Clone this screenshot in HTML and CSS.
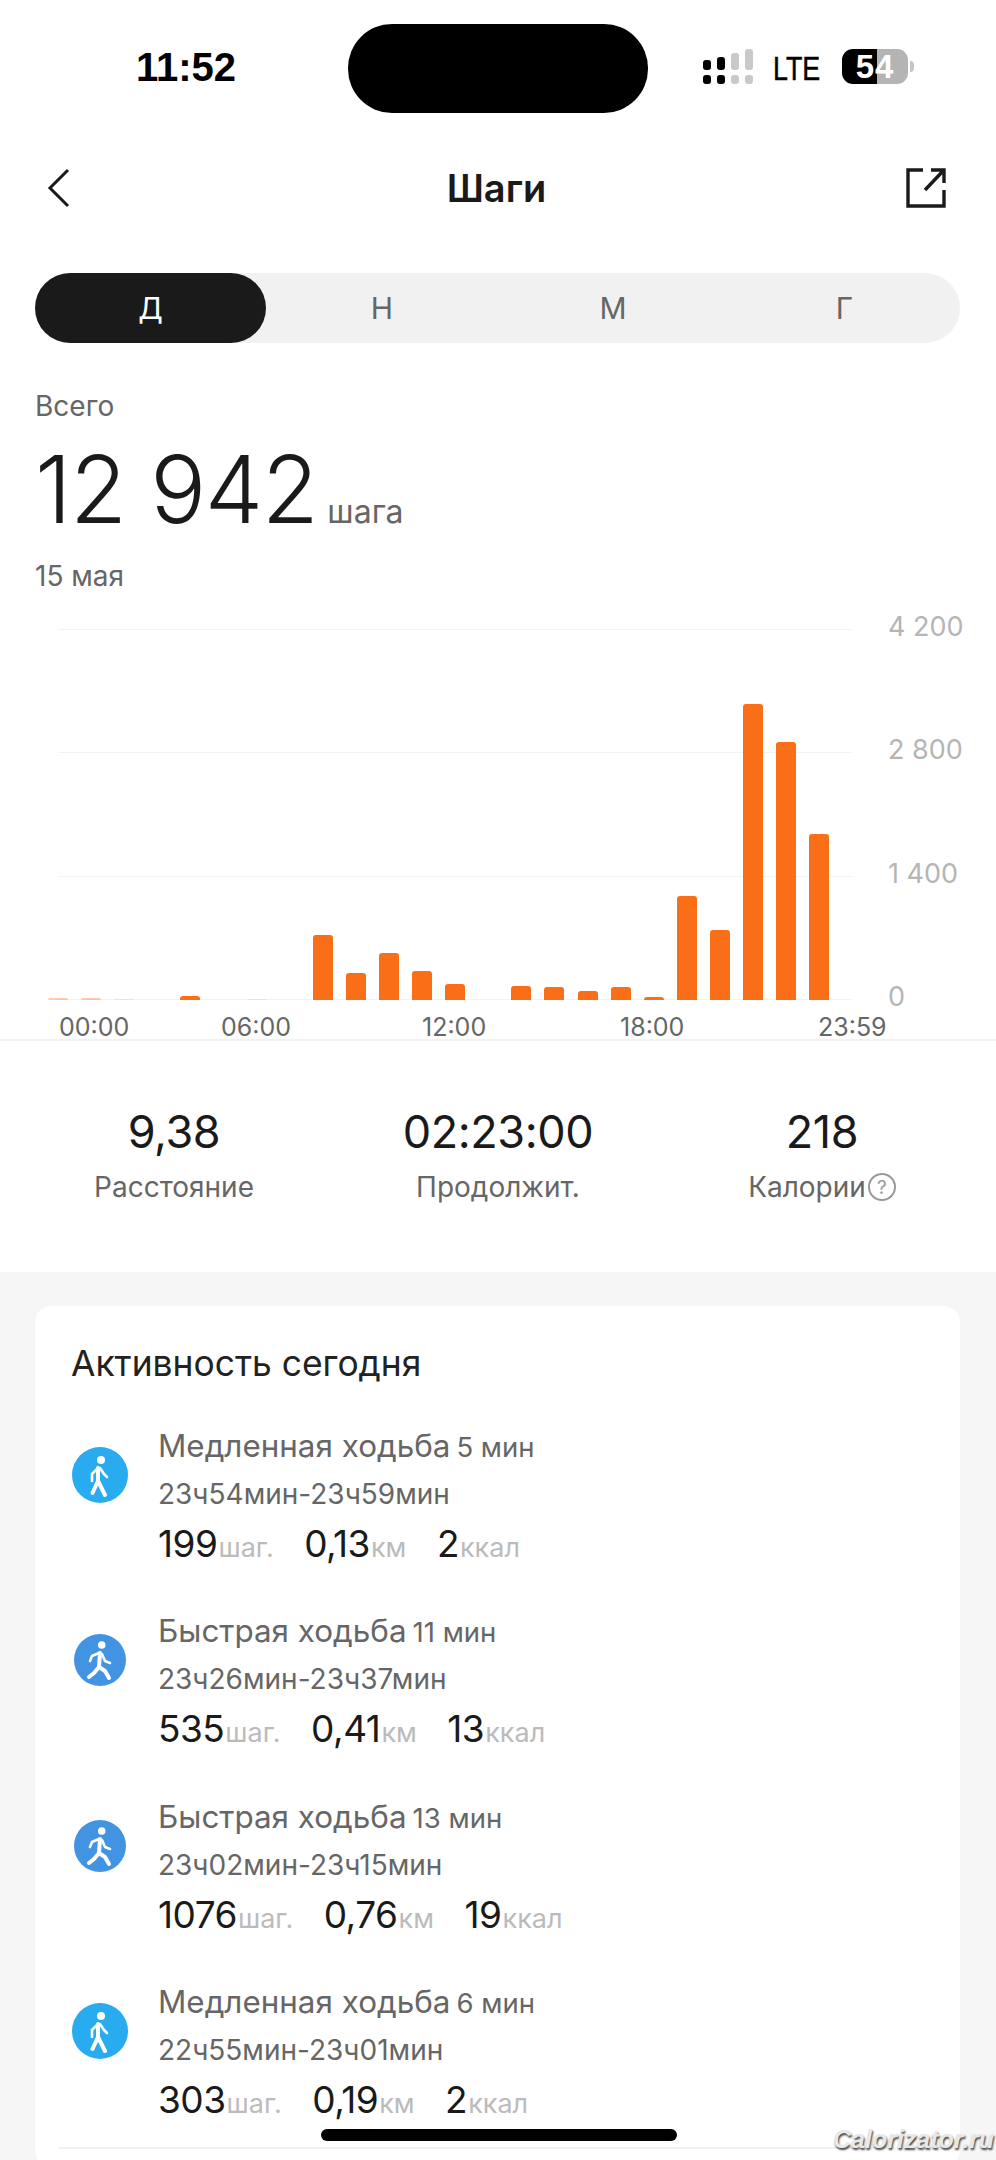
FILE: index.html
```html
<!DOCTYPE html>
<html lang="ru">
<head>
<meta charset="utf-8">
<title>Шаги</title>
<link rel="stylesheet" href="styles.css">
</head>
<body>
<div class="screen">
  <header class="status">
    <span class="clock">11:52</span>
    <span class="island"></span>
    <span class="signal">
      <span class="sig-col"><i class="up h10"></i><i class="down"></i></span>
      <span class="sig-col"><i class="up h13"></i><i class="down"></i></span>
      <span class="sig-col off"><i class="up h17"></i><i class="down"></i></span>
      <span class="sig-col off"><i class="up h21"></i><i class="down"></i></span>
    </span>
    <span class="lte">LTE</span>
    <span class="battery"><span class="batt-num">54</span></span>
    <span class="batt-tip"></span>
  </header>

  <nav class="nav">
    <svg class="nav-back" viewBox="0 0 24 40" width="24" height="40"><path d="M22 2 4 20l18 18" fill="none" stroke="#1a1a1a" stroke-width="3"/></svg>
    <h1 class="nav-title">Шаги</h1>
    <svg class="nav-share" viewBox="0 0 42 42" width="42" height="42"><path d="M18 3H3v36h36V23" fill="none" stroke="#1a1a1a" stroke-width="3.4"/><path d="M20 23 38 4M26 3h13v13" fill="none" stroke="#1a1a1a" stroke-width="3.4"/></svg>
  </nav>

  <div class="tabs">
    <span class="tab active">Д</span>
    <span class="tab">Н</span>
    <span class="tab">М</span>
    <span class="tab">Г</span>
  </div>

  <section class="total">
    <div class="total-label">Всего</div>
    <div class="total-row"><span class="total-num">12 942</span><span class="total-unit">шага</span></div>
    <div class="total-date">15 мая</div>
  </section>

  <section class="chart">
    <div class="plot">
      <div class="gridrow"><span class="gridline"></span><span class="ylabel">4 200</span></div>
      <div class="gridrow"><span class="gridline"></span><span class="ylabel">2 800</span></div>
      <div class="gridrow"><span class="gridline"></span><span class="ylabel">1 400</span></div>
      <div class="gridrow last"><span class="gridline"></span><span class="ylabel">0</span></div>
      <div class="bars">
        <span class="bar faint" style="height:2px"></span>
        <span class="bar faint" style="height:2px"></span>
        <span class="bar fainter" style="height:1px"></span>
        <span class="bar" style="height:0"></span>
        <span class="bar" style="height:4px"></span>
        <span class="bar" style="height:0"></span>
        <span class="bar fainter" style="height:1px"></span>
        <span class="bar" style="height:0"></span>
        <span class="bar" style="height:65px"></span>
        <span class="bar" style="height:27px"></span>
        <span class="bar" style="height:47px"></span>
        <span class="bar" style="height:29px"></span>
        <span class="bar" style="height:16px"></span>
        <span class="bar" style="height:0"></span>
        <span class="bar" style="height:14px"></span>
        <span class="bar" style="height:13px"></span>
        <span class="bar" style="height:9px"></span>
        <span class="bar" style="height:13px"></span>
        <span class="bar" style="height:3px"></span>
        <span class="bar" style="height:104px"></span>
        <span class="bar" style="height:70px"></span>
        <span class="bar" style="height:296px"></span>
        <span class="bar" style="height:258px"></span>
        <span class="bar" style="height:166px"></span>
      </div>
    </div>
    <div class="xlabels">
      <span>00:00</span><span>06:00</span><span>12:00</span><span>18:00</span><span>23:59</span>
    </div>
  </section>

  <section class="stats">
    <div class="stat"><div class="stat-value">9,38</div><div class="stat-label">Расстояние</div></div>
    <div class="stat"><div class="stat-value">02:23:00</div><div class="stat-label">Продолжит.</div></div>
    <div class="stat"><div class="stat-value">218</div><div class="stat-label">Калории<span class="help">?</span></div></div>
  </section>

  <main class="lower">
    <section class="card">
      <h2 class="card-title">Активность сегодня</h2>

      <article class="row">
        <span class="ico-cell"><svg class="ico slow" viewBox="0 0 56 56" width="56" height="56"><circle cx="28" cy="28" r="28" fill="#29abf0"/><circle cx="29" cy="13" r="4" fill="#fff"/><path d="M26 21v13M26 34l-5.500 12M26 34l7 14" fill="none" stroke="#fff" stroke-width="4" stroke-linecap="round"/><path d="M26 21l-6 6v7M28 21l4 6 3 3" fill="none" stroke="#fff" stroke-width="2.600" stroke-linecap="round" stroke-linejoin="round"/></svg></span>
        <div class="row-body">
          <div class="row-title">Медленная ходьба<span class="row-dur">5 мин</span></div>
          <div class="row-time">23ч54мин-23ч59мин</div>
          <div class="row-vals"><span class="val"><b>199</b><em>шаг.</em></span><span class="val"><b>0,13</b><em>км</em></span><span class="val"><b>2</b><em>ккал</em></span></div>
        </div>
      </article>

      <article class="row">
        <span class="ico-cell"><svg class="ico fast" viewBox="0 0 52 52" width="52" height="52"><circle cx="26" cy="26" r="26" fill="#4294e3"/><circle cx="27.700" cy="11" r="3.800" fill="#fff"/><path d="M26 19l-1 14M25 33l-5 6-5 4M25 33l6 4 4 7" fill="none" stroke="#fff" stroke-width="4" stroke-linecap="round" stroke-linejoin="round"/><path d="M25 19l-7 3-2 5M28 20l3 7 5 2" fill="none" stroke="#fff" stroke-width="2.600" stroke-linecap="round" stroke-linejoin="round"/></svg></span>
        <div class="row-body">
          <div class="row-title">Быстрая ходьба<span class="row-dur">11 мин</span></div>
          <div class="row-time">23ч26мин-23ч37мин</div>
          <div class="row-vals"><span class="val"><b>535</b><em>шаг.</em></span><span class="val"><b>0,41</b><em>км</em></span><span class="val"><b>13</b><em>ккал</em></span></div>
        </div>
      </article>

      <article class="row">
        <span class="ico-cell"><svg class="ico fast" viewBox="0 0 52 52" width="52" height="52"><circle cx="26" cy="26" r="26" fill="#4294e3"/><circle cx="27.700" cy="11" r="3.800" fill="#fff"/><path d="M26 19l-1 14M25 33l-5 6-5 4M25 33l6 4 4 7" fill="none" stroke="#fff" stroke-width="4" stroke-linecap="round" stroke-linejoin="round"/><path d="M25 19l-7 3-2 5M28 20l3 7 5 2" fill="none" stroke="#fff" stroke-width="2.600" stroke-linecap="round" stroke-linejoin="round"/></svg></span>
        <div class="row-body">
          <div class="row-title">Быстрая ходьба<span class="row-dur">13 мин</span></div>
          <div class="row-time">23ч02мин-23ч15мин</div>
          <div class="row-vals"><span class="val"><b>1076</b><em>шаг.</em></span><span class="val"><b>0,76</b><em>км</em></span><span class="val"><b>19</b><em>ккал</em></span></div>
        </div>
      </article>

      <article class="row">
        <span class="ico-cell"><svg class="ico slow" viewBox="0 0 56 56" width="56" height="56"><circle cx="28" cy="28" r="28" fill="#29abf0"/><circle cx="29" cy="13" r="4" fill="#fff"/><path d="M26 21v13M26 34l-5.500 12M26 34l7 14" fill="none" stroke="#fff" stroke-width="4" stroke-linecap="round"/><path d="M26 21l-6 6v7M28 21l4 6 3 3" fill="none" stroke="#fff" stroke-width="2.600" stroke-linecap="round" stroke-linejoin="round"/></svg></span>
        <div class="row-body">
          <div class="row-title">Медленная ходьба<span class="row-dur">6 мин</span></div>
          <div class="row-time">22ч55мин-23ч01мин</div>
          <div class="row-vals"><span class="val"><b>303</b><em>шаг.</em></span><span class="val"><b>0,19</b><em>км</em></span><span class="val"><b>2</b><em>ккал</em></span></div>
        </div>
      </article>
      <div class="card-rule"></div>
    </section>
  </main>

  <span class="home-bar"></span>
  <span class="watermark">Calorizator.ru</span>
</div>
</body>
</html>
```
FILE: styles.css
```css
* { box-sizing: border-box; }
html, body { margin: 0; padding: 0; background: #fff; }
body { font-family: Inter, "Liberation Sans", sans-serif; color: #1a1a1a; }
.screen { position: relative; width: 996px; height: 2160px; overflow: hidden; background: #fff; }

/* status bar */
.status { display: flex; align-items: flex-start; height: 113px; padding: 24px 0 0 136px; }
.clock { width: 212px; margin-top: 20px; font: 700 40px/46px "Liberation Sans", sans-serif; color: #000; }
.island { width: 300px; height: 89px; border-radius: 44px; background: #000; }
.signal { display: flex; gap: 6px; margin: 25px 0 0 55px; }
.sig-col { display: flex; flex-direction: column; justify-content: flex-end; width: 8px; height: 35px; gap: 5px; }
.sig-col i { display: block; border-radius: 3px; background: #000; }
.sig-col .down { height: 9px; }
.sig-col.off i { background: #c9c9c9; }
.h10 { height: 10px; }
.h13 { height: 13px; }
.h17 { height: 17px; }
.h21 { height: 21px; }
.lte { width: 48px; margin: 27px 0 0 20px; font: 400 34px/34px "Liberation Sans", sans-serif; color: #000; -webkit-text-stroke: .5px #000; transform: scaleX(.79); transform-origin: left center; }
.battery { display: flex; align-items: center; justify-content: center; width: 66px; height: 35px; margin: 25px 0 0 21px; border-radius: 11px; background: linear-gradient(90deg, #000 0 53%, #b4b4b4 53% 100%); }
.batt-num { font: 700 33px/35px "Liberation Sans", sans-serif; letter-spacing: 1px; color: #fff; }
.batt-tip { width: 4px; height: 11px; margin: 37px 0 0 2px; border-radius: 0 6px 6px 0; background: #c4c4c4; }

/* nav */
.nav { display: grid; grid-template-columns: 1fr auto 1fr; align-items: center; height: 44px; margin-top: 53px; padding: 0 49px 0 46px; }
.nav-back { display: block; }
.nav-title { margin: 0; font-size: 38px; font-weight: 600; line-height: 44px; color: #1a1a1a; }
.nav-share { display: block; justify-self: end; }

/* tabs */
.tabs { display: flex; height: 70px; margin: 63px 36px 0 35px; border-radius: 35px; background: #f1f1f1; }
.tab { flex: 1; display: flex; align-items: center; justify-content: center; border-radius: 35px; font-size: 30px; color: #666; }
.tab.active { background: #1a1a1a; color: #fff; }

/* totals */
.total { padding: 47px 0 0 35px; }
.total-label, .total-date { font-size: 28px; line-height: 32px; color: #666; }
.total-row { display: flex; align-items: baseline; height: 92px; margin-top: 21px; line-height: 92px; }
.total-num { font-size: 93px; font-weight: 300; color: #1a1a1a; letter-spacing: -1.5px; }
.total-unit { margin-left: 10px; font-size: 32px; color: #666; }
.total-date { margin-top: 25px; }

/* chart */
.chart { margin-top: 37px; }
.plot { position: relative; height: 371px; }
.gridrow { display: flex; height: 123.300px; padding-left: 58px; }
.gridrow.last { height: 1px; }
.gridline { width: 794px; height: 1px; background: #f3f3f3; }
.ylabel { position: relative; top: -18px; height: 32px; margin-left: 36px; font-size: 27px; line-height: 32px; color: #b5b5b5; white-space: nowrap; }
.bars { position: absolute; left: 48px; right: 0; bottom: 0; display: flex; align-items: flex-end; gap: 13.100px; }
.bar { width: 20px; flex: none; border-radius: 3px 3px 0 0; background: #f96e17; }
.bar.faint { opacity: .35; }
.bar.fainter { opacity: .15; }
.xlabels { position: relative; height: 39px; padding: 12px 0 0 59px; display: flex; font-size: 25px; line-height: 30px; color: #666; }
.xlabels span:nth-child(1) { width: 162px; }
.xlabels span:nth-child(2) { width: 201px; }
.xlabels span:nth-child(3) { width: 198px; }
.xlabels span:nth-child(4) { width: 198px; }

/* stats */
.stats { display: grid; grid-template-columns: 348px 300px 348px; height: 233px; border-top: 2px solid #f2f2f2; padding-top: 65px; }
.stat { text-align: center; }
.stat-value { font-size: 45px; line-height: 52px; letter-spacing: -.4px; color: #1a1a1a; }
.stat-label { display: flex; align-items: center; justify-content: center; margin-top: 13px; font-size: 28px; line-height: 32px; color: #666; }
.help { display: flex; align-items: center; justify-content: center; width: 28px; height: 28px; margin-left: 2px; border: 2px solid #999; border-radius: 50%; font-size: 19px; line-height: 1; color: #999; }

/* lower */
.lower { height: 888px; padding: 34px 36px 0 35px; background: #f6f6f6; }
.card { height: 860px; padding: 37px 36px 0 36px; border-radius: 16px; background: #fff; }
.card-title { margin: 0 0 41px; font-size: 35.400px; font-weight: 400; line-height: 42px; color: #222; }
.row { display: flex; height: 185.300px; }
.ico-cell { display: flex; justify-content: center; width: 56px; height: 56px; align-items: center; margin-top: 21px; margin-left: 1px; }
.ico { display: block; }
.row-body { margin-left: 30px; }
.row-title { display: flex; align-items: baseline; font-size: 31.400px; line-height: 40px; color: #666; }
.row-dur { margin-left: 6px; font-size: 27.500px; }
.row-time { margin-top: 8px; font-size: 28px; line-height: 38px; color: #666; }
.row-vals { display: flex; gap: 30.500px; margin-top: 8px; }
.val { display: flex; align-items: baseline; line-height: 46px; }
.val b { font-size: 37px; font-weight: 400; letter-spacing: -.5px; color: #1a1a1a; }
.val em { margin-left: 1px; font-size: 27px; font-style: normal; color: #bbb; }
.card-rule { width: 850px; height: 2px; margin: -20px 0 0 -13px; background: #f2f2f2; }

/* overlays */
.home-bar { position: absolute; left: 321px; top: 2129px; width: 356px; height: 12px; border-radius: 6px; background: #000; }
.watermark { position: absolute; left: 833px; top: 2126px; font: italic 700 25px/26px "Liberation Sans", sans-serif; color: #e8e8e8; text-shadow: 1px 2px 2px #444; white-space: nowrap; }
```
